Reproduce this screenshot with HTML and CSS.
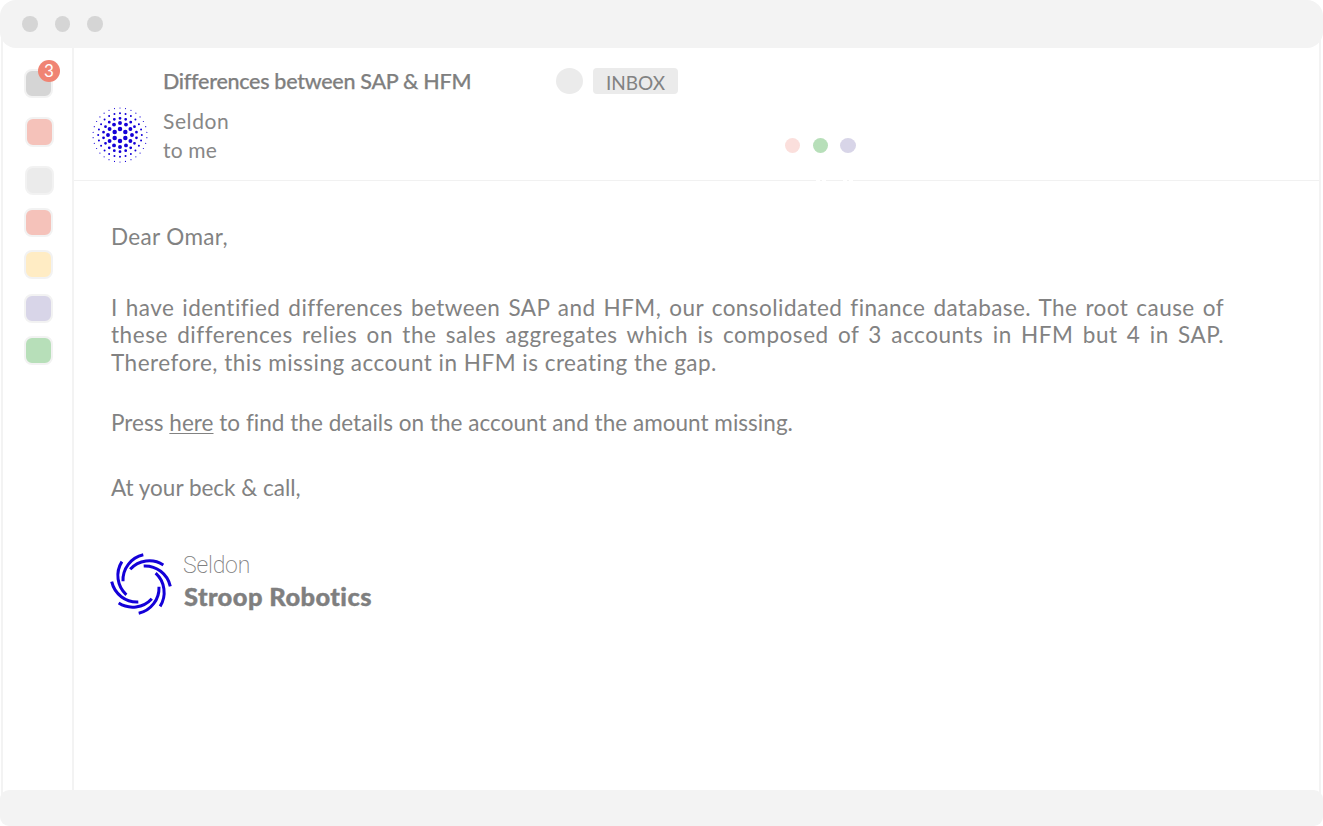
FILE: index.html
```html
<!DOCTYPE html>
<html lang="en">
<head>
<meta charset="utf-8">
<title>Differences between SAP &amp; HFM</title>
<link rel="stylesheet" href="styles.css">
</head>
<body>
<div class="window">
  <header class="titlebar"><i class="control"></i><i class="control"></i><i class="control"></i></header>
  <div class="frame">
    <nav class="sidebar">
      <div class="tile gray"><span class="badge">3</span></div>
      <div class="tile red shifted"></div>
      <div class="tile light shifted"></div>
      <div class="tile red"></div>
      <div class="tile yellow"></div>
      <div class="tile purple"></div>
      <div class="tile green"></div>
    </nav>
    <main class="mail">
      <section class="mail-head">
        <svg class="avatar" viewBox="-28 -28 56 56">
          <g fill="none" stroke="#1400d8" stroke-linecap="round" transform="rotate(-90)">
            <circle r="6.1" pathLength="6" stroke-dasharray="0 1" stroke-width="4.5"/>
            <circle r="12" pathLength="12" stroke-dasharray="0 1" stroke-width="3.9"/>
            <circle r="16.7" pathLength="18" stroke-dasharray="0 1" stroke-width="2.8"/>
            <circle r="21.8" pathLength="24" stroke-dasharray="0 1" stroke-width="2"/>
            <circle r="27" pathLength="30" stroke-dasharray="0 1" stroke-width="1.2"/>
          </g>
        </svg>
        <div class="details">
          <div class="subject-row">
            <h1 class="subject">Differences between SAP &amp; HFM</h1>
            <i class="marker"></i>
            <span class="label">INBOX</span>
          </div>
          <div class="from-row">
            <div class="people"><div class="sender">Seldon</div><div class="recipient">to me</div></div>
            <div class="dots">
              <i class="dot pink"></i>
              <i class="dot green"><i class="notch"></i></i>
              <i class="dot purple"><i class="notch"></i></i>
            </div>
          </div>
        </div>
      </section>
      <article class="letter">
        <p class="greeting">Dear Omar,</p>
        <p class="body-text">
          <span class="line full">I have identified differences between SAP and HFM, our consolidated finance database. The root cause of</span>
          <span class="line full second">these differences relies on the sales aggregates which is composed of 3 accounts in HFM but 4 in SAP.</span>
          <span class="line last">Therefore, this missing account in HFM is creating the gap.</span>
        </p>
        <p class="press">Press <a class="link">here</a> to find the details on the account and the amount missing.</p>
        <p class="closing">At your beck &amp; call,</p>
        <div class="signature">
          <svg class="swirl" viewBox="-31 -31 62 62">
            <defs><path id="blade" d="M2.3-29.3A26 26 0 0 0-18-2.7"/></defs>
            <g fill="none" stroke="#1400d8" stroke-width="3">
              <use href="#blade"/><use href="#blade" transform="rotate(45)"/>
              <use href="#blade" transform="rotate(90)"/><use href="#blade" transform="rotate(135)"/>
              <use href="#blade" transform="rotate(180)"/><use href="#blade" transform="rotate(225)"/>
              <use href="#blade" transform="rotate(270)"/><use href="#blade" transform="rotate(315)"/>
            </g>
          </svg>
          <div class="sign-text"><div class="sign-name">Seldon</div><div class="company">Stroop Robotics</div></div>
        </div>
      </article>
    </main>
  </div>
  <footer class="bottombar"></footer>
</div>
</body>
</html>
```
FILE: styles.css
```css
* { box-sizing: border-box; }
body { margin: 0; background: #fff; color: #828282; font-family: Lato, "Open Sans", sans-serif; font-variant-ligatures: none; }
h1, p { margin: 0; font-weight: 400; }
.window { width: 1323px; height: 826px; display: flex; flex-direction: column; overflow: hidden; }
.titlebar { height: 48px; flex: none; z-index: 1; background: #f3f3f3; border-radius: 16px; display: flex; gap: 17px; padding: 16px 0 0 22px; }
.control { width: 15.5px; height: 16px; border-radius: 50%; background: #d5d5d5; }
.frame { flex: 1; display: flex; margin: -10px 2px -10px 1px; padding-top: 10px; border: solid #f3f3f3; border-width: 0 2px; }
.bottombar { height: 36px; flex: none; z-index: 1; background: #f3f3f3; border-radius: 9px; }
.sidebar { width: 71px; flex: none; border-right: 2px solid #f3f3f3; padding: 21px 0 0 21px; }
.tile { width: 29px; height: 29px; border: 2px solid #f2f2f2; border-radius: 8px; margin-bottom: 13px; position: relative; }
.tile.gray { background: #d5d5d5; margin-bottom: 19px; }
.tile.shifted { margin-left: 1px; }
.tile.red { background: #f5c2ba; }
.tile.red.shifted { height: 30px; margin-bottom: 19px; }
.tile.light { background: #ebebeb; }
.tile.yellow { background: #ffecc4; margin-bottom: 15px; }
.tile.purple { background: #d8d5e8; }
.tile.green { background: #b7dfb9; }
.badge { position: absolute; left: 12px; top: -11px; width: 22px; height: 22px; border-radius: 50%; background: #f08473; color: #fff; font-size: 17px; line-height: 22px; text-align: center; }
.mail { flex: 1; }
.mail-head { height: 133px; border-bottom: 1px solid #f1f1f1; display: flex; }
.avatar { width: 56px; height: 56px; margin: 59px 0 0 18px; flex: none; }
.details { margin-left: 15px; padding-top: 20px; }
.subject-row { display: flex; height: 27px; }
.subject { width: 393px; font-size: 21.5px; line-height: 27px; font-weight: 500; letter-spacing: -.28px; white-space: nowrap; color: #7f7f7f; -webkit-text-stroke: .25px #7f7f7f; }
.marker { width: 27px; height: 26px; border-radius: 50%; background: #ebebeb; }
.label { margin-left: 10px; width: 85px; height: 26px; border-radius: 4px; background: #ebebeb; text-align: center; font-size: 19px; line-height: 29px; }
.from-row { display: flex; padding-top: 12px; }
.people { width: 622px; font-size: 21px; line-height: 29px; letter-spacing: .6px; margin-top: -1px; color: #878787; }
.recipient { letter-spacing: .2px; }
.dots { display: flex; gap: 12.5px; padding-top: 31px; }
.dot { width: 15px; height: 15px; border-radius: 50%; position: relative; }
.dot.pink { background: #fbdfdc; }
.dot.green { background: #b7dfb9; }
.dot.purple { width: 16px; background: #d8d5e8; }
.notch { position: absolute; top: 42px; left: 3px; width: 10px; height: 2px; border: solid #fff; border-width: 0 4px; }
.letter { padding: 42px 0 0 37px; font-size: 22.5px; line-height: 27.5px; }
.greeting { letter-spacing: .35px; }
.body-text { margin-top: 43px; width: 1113px; }
.line { display: block; white-space: nowrap; letter-spacing: .45px; }
.full { text-align: justify; text-align-last: justify; }
.second { letter-spacing: .55px; }
.last { letter-spacing: .49px; }
.press { margin-top: 33px; letter-spacing: .03px; }
.link { text-decoration: underline; text-decoration-thickness: 1px; text-underline-offset: 2px; }
.closing { margin-top: 37px; }
.signature { margin-top: 51px; display: flex; gap: 12px; }
.swirl { width: 62px; height: 62px; margin: 1px 0 0 -1px; }
.sign-name { font-family: Roboto, sans-serif; font-weight: 200; font-size: 23px; line-height: 28px; margin-left: -1px; letter-spacing: -.2px; color: #7f7f7f; }
.company { font-size: 25.5px; line-height: 33px; font-weight: 900; letter-spacing: .4px; color: #7f7f7f; -webkit-text-stroke: .4px #7f7f7f; }
```
